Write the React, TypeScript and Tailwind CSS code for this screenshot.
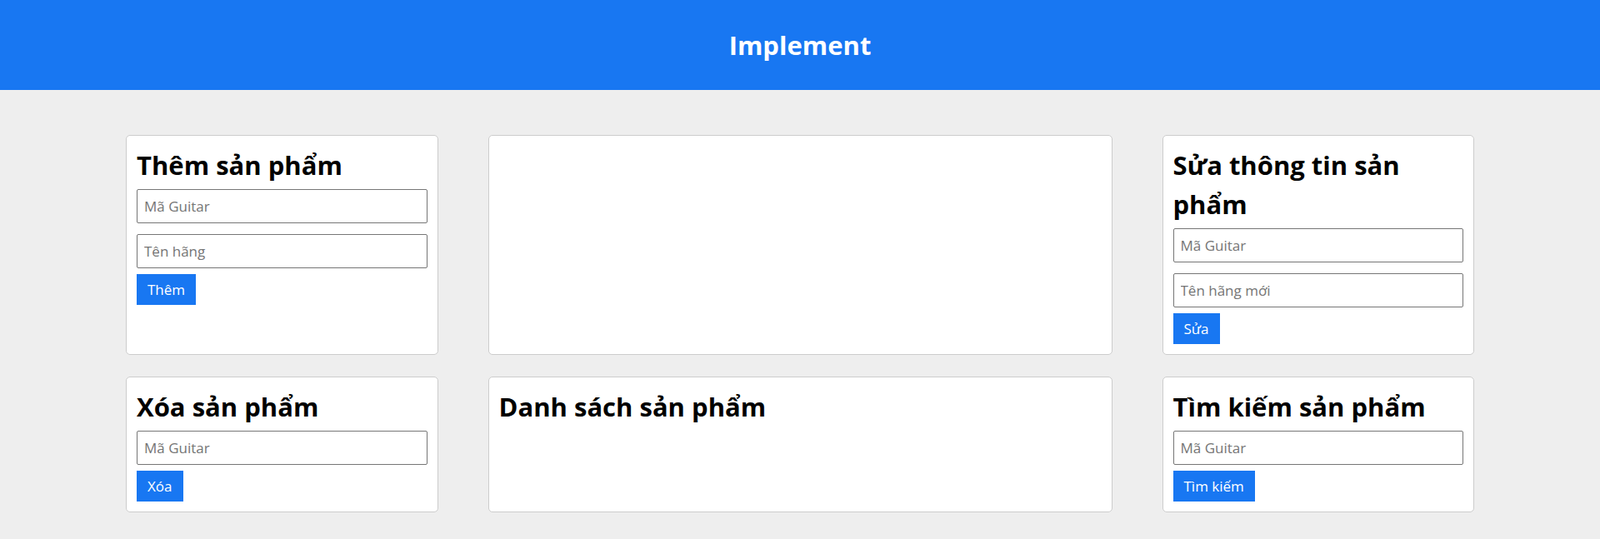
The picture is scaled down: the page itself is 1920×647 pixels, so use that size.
import React from "react";

const font = { fontFamily: '"Open Sans", "Noto Sans", sans-serif' };

function Input({ placeholder, className = "" }: { placeholder: string; className?: string }) {
  return (
    <input
      placeholder={placeholder}
      className={`block w-full h-[41px] border border-[#767676] rounded-[2px] px-[8px] text-[17px] text-black placeholder:text-[#757575] bg-white outline-none ${className}`}
    />
  );
}

function Btn({ label }: { label: string }) {
  return (
    <button className="block h-[37px] px-[13px] bg-[#1877f2] text-white text-[17px] leading-[37px]">
      {label}
    </button>
  );
}

function Card({ children, className = "" }: { children?: React.ReactNode; className?: string }) {
  return (
    <div className={`bg-white border border-[#cccccc] rounded-[5px] px-[12px] pt-[12px] pb-[12px] ${className}`}>
      {children}
    </div>
  );
}

function Title({ children }: { children: React.ReactNode }) {
  return <h2 className="text-[31px] leading-[47px] font-bold text-black mb-[5px]">{children}</h2>;
}

export default function App() {
  return (
    <div className="min-h-screen bg-[#eeeeee]" style={font}>
      <header className="h-[108px] bg-[#1877f2] flex items-center justify-center">
        <h1 className="text-white text-[31px] font-bold">Implement</h1>
      </header>
      <main className="px-[151px] pt-[54px] pb-[32px] grid grid-cols-[1fr_2fr_1fr] gap-x-[60px] gap-y-[26px]">
        <Card>
          <Title>Thêm sản phẩm</Title>
          <Input placeholder="Mã Guitar" className="mb-[13px]" />
          <Input placeholder="Tên hãng" className="mb-[7px]" />
          <Btn label="Thêm" />
        </Card>
        <Card />
        <Card>
          <Title>Sửa thông tin sản phẩm</Title>
          <Input placeholder="Mã Guitar" className="mb-[13px]" />
          <Input placeholder="Tên hãng mới" className="mb-[7px]" />
          <Btn label="Sửa" />
        </Card>
        <Card>
          <Title>Xóa sản phẩm</Title>
          <Input placeholder="Mã Guitar" className="mb-[7px]" />
          <Btn label="Xóa" />
        </Card>
        <Card>
          <Title>Danh sách sản phẩm</Title>
        </Card>
        <Card>
          <Title>Tìm kiếm sản phẩm</Title>
          <Input placeholder="Mã Guitar" className="mb-[7px]" />
          <Btn label="Tìm kiếm" />
        </Card>
      </main>
    </div>
  );
}
